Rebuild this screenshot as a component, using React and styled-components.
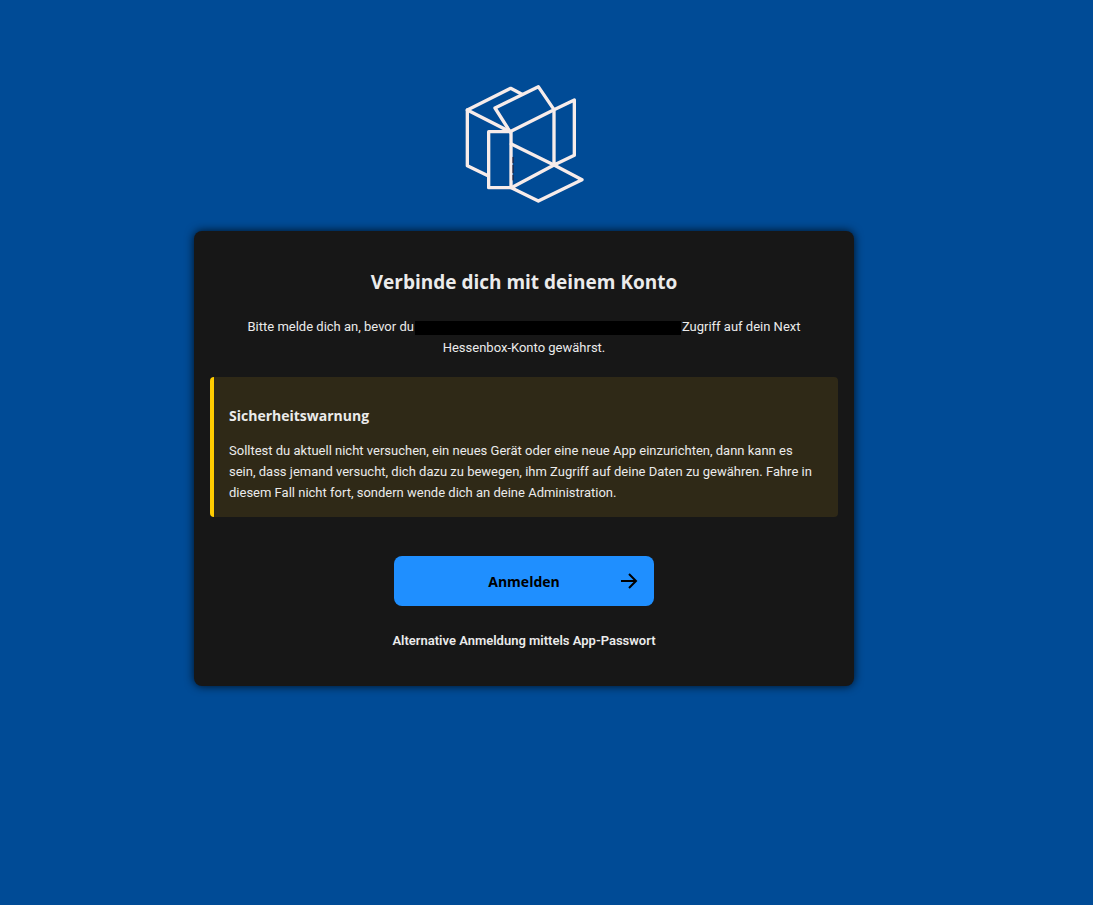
import styled, { createGlobalStyle } from "styled-components";

const headingFont = '"Open Sans", "Noto Sans", sans-serif';

const GlobalStyle = createGlobalStyle`
    * {
        box-sizing: border-box;
    }

    body {
        margin: 0;
        background-color: #004b96;
        color: #ebebeb;
        font-family: Roboto, "Noto Sans", sans-serif;
        font-size: 13px;
        line-height: 21px;
    }
`;

const Wrapper = styled.div`
    min-height: 100vh;
    padding: 84px 45px 40px 0;
    display: flex;
    flex-direction: column;
    align-items: center;
`;

const Logo = styled.svg`
    width: 120px;
    height: 120px;
    margin-bottom: 27px;
    fill: none;
    stroke: #f7ecea;
    stroke-width: 10;
    stroke-linejoin: round;
    stroke-linecap: round;
`;

const Card = styled.main`
    width: 100%;
    max-width: 660px;
    padding: 36px 16px 35px;
    display: flex;
    flex-direction: column;
    align-items: center;
    background-color: #171717;
    border-radius: 8px;
    box-shadow: 0 0 10px rgba(0, 0, 0, 0.8);
`;

const Title = styled.h1`
    margin: 0 0 19px;
    font-family: ${headingFont};
    font-size: 19px;
    line-height: 30px;
    font-weight: 700;
    text-align: center;
`;

const Info = styled.p`
    max-width: 580px;
    margin: 0 0 19px;
    text-align: center;
`;

const Redacted = styled.span`
    display: inline-block;
    width: 266px;
    height: 14px;
    margin: 0 1px;
    vertical-align: middle;
    background-color: #000;
`;

const Warning = styled.section`
    width: 100%;
    margin-bottom: 39px;
    padding: 26px 20px 14px 15px;
    background-color: #2f2917;
    border-left: 4px solid #ffcc00;
    border-radius: 4px;
`;

const WarningTitle = styled.h2`
    margin: 0 0 12px;
    font-family: ${headingFont};
    font-size: 14px;
    line-height: 25px;
    font-weight: 700;
`;

const WarningText = styled.p`
    margin: 0;
`;

const Button = styled.button`
    width: 260px;
    height: 50px;
    margin-bottom: 24px;
    padding: 0 15px;
    display: grid;
    grid-template-columns: 20px 1fr 20px;
    align-items: center;
    border: none;
    border-radius: 8px;
    background-color: #1f8fff;
    color: #000;
    font-family: ${headingFont};
    font-size: 14px;
    font-weight: 700;
    cursor: pointer;
`;

const ButtonLabel = styled.span`
    grid-column: 2;
    text-align: center;
`;

const Arrow = styled.svg`
    width: 20px;
    height: 20px;
    fill: none;
    stroke: #000;
    stroke-width: 2;
`;

const AltLink = styled.a`
    color: inherit;
    font-weight: 600;
    text-decoration: none;
`;

const App = () => {
    return (
        <>
            <GlobalStyle />
            <Wrapper>
                <Logo viewBox="30 30 360 360" role="img" aria-label="Hessenbox">
                    <path d="M102 305 40 275V108L170 43 204 61" />
                    <path d="M40 108 168 173" />
                    <path d="M168 173 123 102 253 38 300 107Z" />
                    <path d="M104 173H171V341H104Z" />
                    <path d="M300 107 361 78V244L300 273Z" />
                    <path d="M172 210 300 273 384 317 253 381 172 341 300 273" />
                    <path d="M177 250v16m0 8v22m0 8v14" stroke="#2a1520" strokeWidth="3" />
                </Logo>
                <Card>
                    <Title>Verbinde dich mit deinem Konto</Title>
                    <Info>
                        Bitte melde dich an, bevor du<Redacted />Zugriff auf dein Next Hessenbox-Konto gewährst.
                    </Info>
                    <Warning>
                        <WarningTitle>Sicherheitswarnung</WarningTitle>
                        <WarningText>
                            Solltest du aktuell nicht versuchen, ein neues Gerät oder eine neue App einzurichten,
                            dann kann es sein, dass jemand versucht, dich dazu zu bewegen, ihm Zugriff auf deine
                            Daten zu gewähren. Fahre in diesem Fall nicht fort, sondern wende dich an deine
                            Administration.
                        </WarningText>
                    </Warning>
                    <Button type="button">
                        <ButtonLabel>Anmelden</ButtonLabel>
                        <Arrow viewBox="0 0 20 20" aria-hidden="true">
                            <path d="M2 10H17M10 3l7 7-7 7" />
                        </Arrow>
                    </Button>
                    <AltLink href="#app-passwort">Alternative Anmeldung mittels App-Passwort</AltLink>
                </Card>
            </Wrapper>
        </>
    );
};

export default App;
